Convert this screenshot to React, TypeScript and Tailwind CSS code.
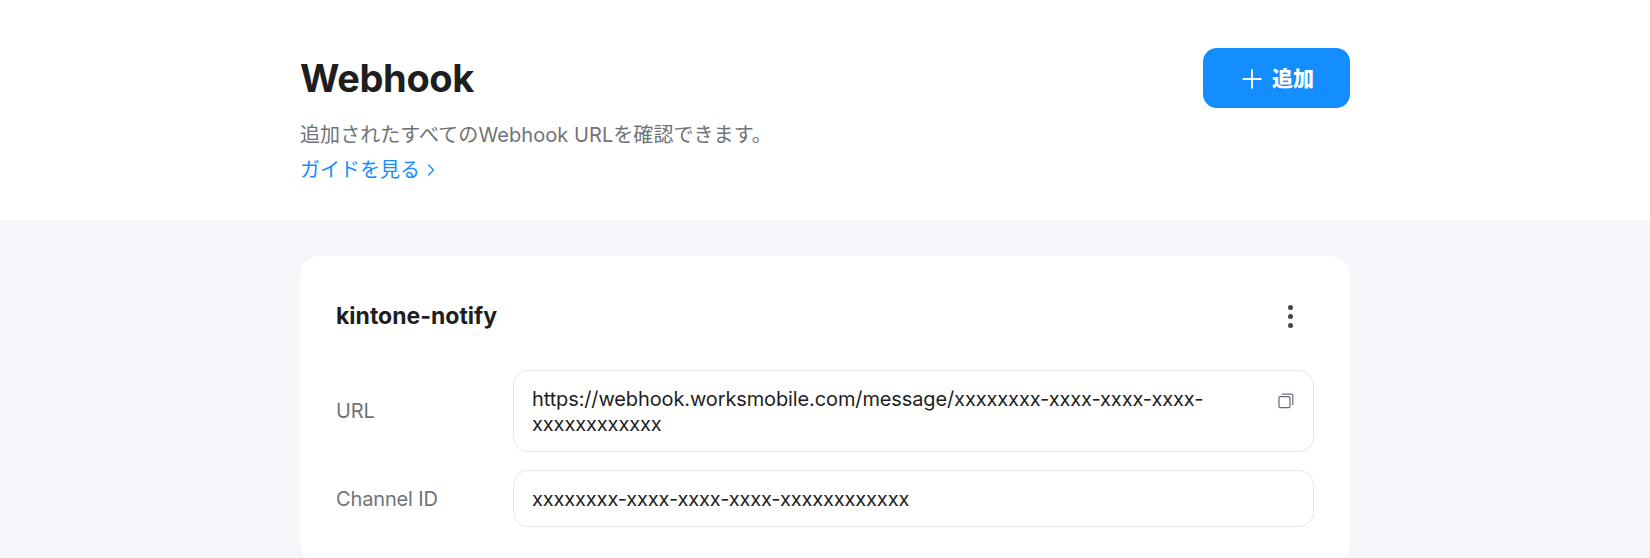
import { Plus, ChevronRight } from "lucide-react"

const fontStack = "font-['Inter','Noto_Sans_CJK_JP',sans-serif]"

function CopyIcon() {
  return (
    <svg width="16" height="16" viewBox="0 0 16 16" fill="none" stroke="#666b70" strokeWidth="1.2">
      <rect x="1" y="3.6" width="11" height="11" rx="1.2" />
      <path d="M4 1.2h9.4a1.4 1.4 0 0 1 1.4 1.4V12" />
    </svg>
  )
}

function Field({ label, children }: { label: string; children: React.ReactNode }) {
  return (
    <div className="flex items-center">
      <div className="w-[177px] shrink-0 text-[20px] tracking-[-0.15px] text-[#6f7377]">{label}</div>
      {children}
    </div>
  )
}

export default function App() {
  return (
    <div className={`h-screen overflow-hidden bg-[#f5f6fa] ${fontStack}`}>
      <header className="h-[220px] bg-white pt-[48px]">
        <div className="mx-auto flex w-[1050px] items-start justify-between">
          <div>
            <h1 className="text-[38px] leading-[60px] font-bold tracking-[-0.35px] text-[#1e1e1e]">Webhook</h1>
            <p className="mt-[14px] text-[20px] leading-[26px] tracking-[0.07px] text-[#6f7377]">
              追加されたすべてのWebhook URLを確認できます。
            </p>
            <a className="mt-[9px] flex items-center gap-[1px] text-[20px] leading-[26px] text-[#1a8cff]">
              ガイドを見る
              <ChevronRight size={20} strokeWidth={1.6} />
            </a>
          </div>
          <button className="flex h-[60px] w-[147px] items-center justify-center gap-[5px] rounded-[14px] bg-[#138dff] pt-[2px] pr-[2px] text-[21px] font-extrabold text-white">
            <Plus size={30} strokeWidth={1.5} />
            追加
          </button>
        </div>
      </header>

      <main className="mx-auto mt-[36px] w-[1050px] rounded-[20px] bg-white px-[36px] pt-[39px] pb-[36px]">
        <div className="flex h-[42px] items-center justify-between">
          <h2 className="text-[23px] font-bold text-[#1e1e1e]">kintone-notify</h2>
          <div className="mr-[21px] flex flex-col gap-[4px]">
            <span className="h-[5px] w-[5px] rounded-full bg-[#43464a]" />
            <span className="h-[5px] w-[5px] rounded-full bg-[#43464a]" />
            <span className="h-[5px] w-[5px] rounded-full bg-[#43464a]" />
          </div>
        </div>

        <div className="mt-[33px] flex flex-col gap-[18px]">
          <Field label="URL">
            <div className="relative flex-1 rounded-[15px] border border-[#e5e7ea] pt-[16px] pr-[58px] pb-[14px] pl-[18px] text-[20px] leading-[25px] tracking-[-0.12px] text-[#1e1e1e]">
              https://webhook.worksmobile.com/message/xxxxxxxx-xxxx-xxxx-xxxx-xxxxxxxxxxxx
              <span className="absolute top-[22px] right-[19px]">
                <CopyIcon />
              </span>
            </div>
          </Field>
          <Field label="Channel ID">
            <div className="flex-1 rounded-[15px] border border-[#e5e7ea] pt-[16px] pr-[18px] pb-[14px] pl-[18px] text-[20px] leading-[25px] tracking-[-0.15px] text-[#1e1e1e]">
              xxxxxxxx-xxxx-xxxx-xxxx-xxxxxxxxxxxx
            </div>
          </Field>
        </div>
      </main>
    </div>
  )
}
